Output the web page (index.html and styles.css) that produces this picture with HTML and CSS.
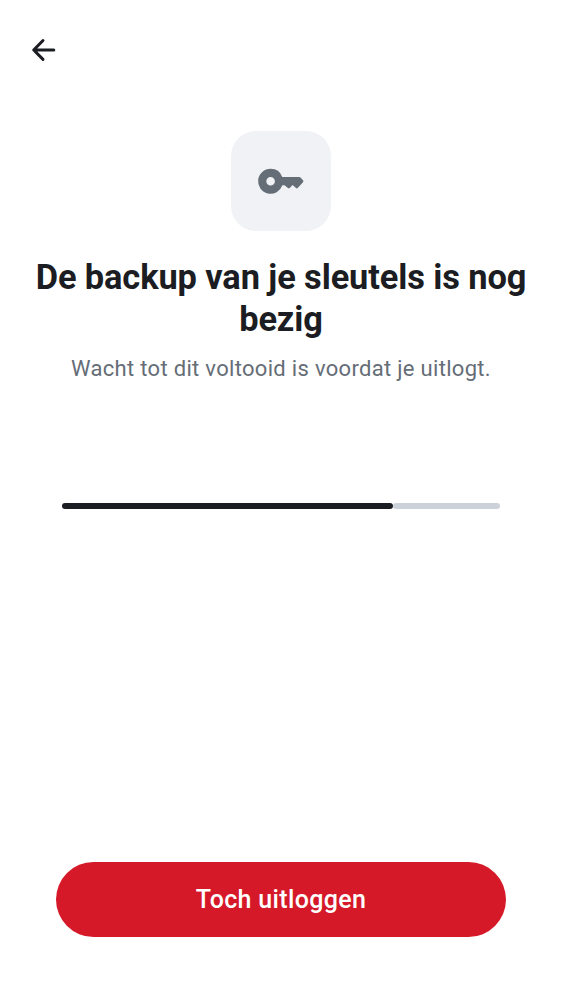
FILE: index.html
```html
<!DOCTYPE html>
<html lang="nl">
<head>
<meta charset="utf-8">
<title>Uitloggen</title>
<link rel="stylesheet" href="styles.css">
</head>
<body>
<div class="screen">
  <header class="topbar">
    <svg class="back" viewBox="0 0 38 38"><path d="M28.8 19H9M18 9.5 8.7 19 18 28.4"/></svg>
  </header>
  <main class="content">
    <div class="tile">
      <svg class="key" viewBox="0 0 50 50"><path fill-rule="evenodd" d="M14.6 12.7a12.5 12.5 0 0 1 11.7 8.2h17q.7 0 1.2.5l2.5 2.8q.9 1 0 2l-5.3 5.8q-.8.8-1.7 0L36.600 28.900l-2.900 3.100q-.8.8-1.700 0l-3.500-2.700h-2.100A12.500 12.500 0 1 1 14.600 12.700Zm0 8.200a4.300 4.300 0 1 0 0 8.600 4.300 4.300 0 0 0 0-8.600Z"/></svg>
    </div>
    <h1 class="title">De backup van je sleutels is nog bezig</h1>
    <p class="subtitle">Wacht tot dit voltooid is voordat je uitlogt.</p>
    <div class="progress"><div class="progress-fill"></div><div class="progress-rest"></div></div>
  </main>
  <footer class="footer"><button class="logout">Toch uitloggen</button></footer>
</div>
</body>
</html>
```
FILE: styles.css
```css
body { margin: 0; background: #fff; font-family: Roboto, sans-serif; }
.screen { height: 1000px; box-sizing: border-box; display: flex; flex-direction: column; }
.topbar { height: 100px; padding: 31px 0 0 25px; box-sizing: border-box; }
.back { display: block; width: 38px; height: 38px; fill: none; stroke: #1b1d22; stroke-width: 3; stroke-linecap: round; stroke-linejoin: round; }
.content { flex: 1; display: flex; flex-direction: column; align-items: center; padding-top: 31px; }
.tile { width: 100px; height: 100px; border-radius: 25px; background: #f0f2f5; display: flex; align-items: center; justify-content: center; }
.key { width: 50px; height: 50px; fill: #656d77; }
.title { margin: 25px 0 0; width: 512px; text-align: center; font-size: 34.4px; line-height: 42px; letter-spacing: -0.1px; font-weight: 700; color: #1b1d22; }
.subtitle { margin: 13px 0 0; font-size: 22px; line-height: 31px; letter-spacing: 0.31px; color: #656d77; }
.progress { width: 438px; height: 6px; margin-top: 119px; display: flex; }
.progress-fill { width: 331px; border-radius: 3px; background: #1b1d22; }
.progress-rest { flex: 1; border-radius: 3px; background: #cbd2d9; }
.footer { padding: 0 56px 63px; }
.logout { display: block; width: 100%; height: 75px; padding: 0; border: 0; border-radius: 38px; background: #d51928; color: #fff; font: 500 25px/31px Roboto, sans-serif; letter-spacing: 0.33px; }
```
